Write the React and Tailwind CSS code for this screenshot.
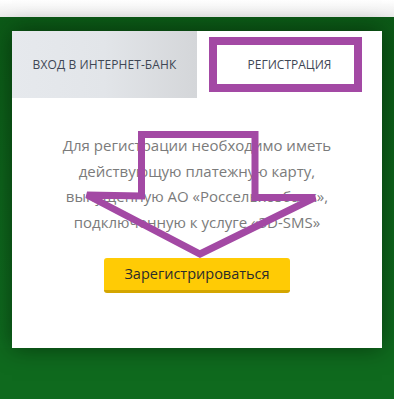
export default function App() {
  return (
    <div className="relative w-[394px] h-[399px] overflow-hidden bg-[#0f6a1e]" style={{ fontFamily: '"Open Sans", "Liberation Sans", sans-serif' }}>
      <div className="h-[17px] bg-gradient-to-b from-white to-[#ececec]" />
      <div className="px-3 pt-[14px] bg-gradient-to-b from-[#0c5a17] via-[#0e641c] to-[#0f6b1f]">
        <div className="bg-white h-[317px] shadow-[0_0_22px_rgba(0,20,0,0.55)] flex flex-col">
          <div className="flex h-[67px]">
            <div className="w-[185px] flex items-center justify-center bg-gradient-to-r from-[#e6e9ed] via-[#e2e5e9] to-[#d4d6d9] text-[12px] text-[#3e4654] tracking-[0.1px]">
              ВХОД В ИНТЕРНЕТ-БАНК
            </div>
            <div className="flex-1 flex items-center justify-center text-[12px] text-[#3e4654]">
              РЕГИСТРАЦИЯ
            </div>
          </div>
          <p className="mt-[35px] text-center text-[15px] leading-[25.5px] text-[#7b7b7b]">
            Для регистрации необходимо иметь<br />
            действующую платежную карту,<br />
            выпущенную АО «Россельхозбанк»,<br />
            подключенную к услуге «3D-SMS»
          </p>
          <div className="mt-[23px] flex justify-center">
            <button className="w-[186px] h-[35px] rounded-[3px] bg-[#ffcb05] border-b-[3px] border-[#d4a600] text-[14.5px] text-[#2b2b2b]">
              Зарегистрироваться
            </button>
          </div>
        </div>
      </div>
      <svg className="absolute left-0 top-0 pointer-events-none" width="394" height="399" viewBox="0 0 394 399">
        <rect x="213" y="41" width="145" height="47" fill="none" stroke="#a349a4" strokeWidth="8" />
        <polygon
          points="141.5,134.5 255,134.5 255,197.5 315,197.5 200,254 87,195 141.5,196"
          fill="none"
          stroke="#a349a4"
          strokeWidth="7"
          strokeLinejoin="miter"
        />
      </svg>
    </div>
  );
}
